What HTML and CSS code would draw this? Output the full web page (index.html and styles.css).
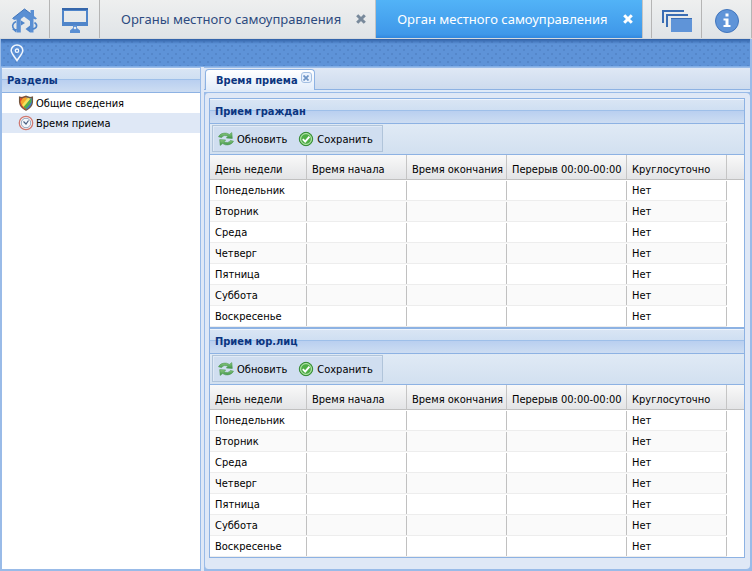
FILE: index.html
```html
<!DOCTYPE html>
<html lang="ru">
<head>
<meta charset="utf-8">
<title>Орган местного самоуправления</title>
<link rel="stylesheet" href="styles.css">
</head>
<body>
<svg class="defs" aria-hidden="true">
  <defs>
    <linearGradient id="green" x1="0" y1="0" x2="0" y2="1"><stop offset="0" stop-color="#8fcb80"/><stop offset="1" stop-color="#3f9448"/></linearGradient>
    <symbol id="refresh" viewBox="0 0 16 16">
      <path d="M.5 5.800C2 2.800 5 1.800 8.500 2.200L11.500 3.400 13.800 1.600 14.300 7.400 8.300 7 10 5.300C7.500 4 5 4.200 3.600 6.600z" fill="url(#green)" stroke="#4b9750" stroke-width=".6"/>
      <path d="M15.500 10.200C14 13.200 11 14.200 7.500 13.800L4.500 12.600 2.200 14.400 1.700 8.600 7.700 9 6 10.700C8.500 12 11 11.800 12.400 9.400z" fill="url(#green)" stroke="#4b9750" stroke-width=".6"/>
    </symbol>
    <symbol id="save" viewBox="0 0 16 16">
      <circle cx="8" cy="8" r="6.700" fill="#4fae45" stroke="#358b35" stroke-width="1"/>
      <circle cx="8" cy="8" r="5.400" fill="none" stroke="#c4eabb" stroke-width="1"/>
      <path d="M4.800 8.100l2.400 2.500 4.200-5" fill="none" stroke="#fff" stroke-width="1.900"/>
    </symbol>
  </defs>
</svg>

<header class="topbar">
  <button class="icon-button" type="button" aria-label="Главная">
    <svg width="28" height="26" viewBox="0 0 28 26"><path d="M1.500 10.500L13.500 1l6 4.500V2h3.500v6l3 2.500-1.500 1-2-.8V24.500h-3.500V13L13 8.500 9.800 11v13.500H5.500V11.500L3 12z" fill="#5a8fd3"/><path d="M1.500 10.500L13.500 1l6 4.500" fill="none" stroke="#3f73b9"/><path d="M5 13.500C.8 15.500.8 19 3.500 21.500M23.500 14.500c3.500 2.500 2.500 6-2 6.500" fill="none" stroke="#4f85ca" stroke-width="1.600"/><path d="M1 21h5l-1 3.500zM19 17.500v7l-4.500-3.500zM10 17.500v-5l4 2.500z" fill="#4f85ca"/></svg>
  </button>
  <button class="icon-button" type="button" aria-label="Рабочий стол">
    <svg width="28" height="26" viewBox="0 0 28 26"><path d="M1 1h26v17H1zM3 3v11h22V3z" fill="#4f85ca" fill-rule="evenodd"/><path d="M1 1h26" stroke="#3566ab" stroke-width="2"/><path d="M12 17h4v3l3 2.500V25H9v-2.500l3-2.500z" fill="#5a8fd3"/><circle cx="14" cy="20" r="1.300" fill="#e5eaf0"/></svg>
  </button>
  <div class="page-tab">
    <button class="page-name" type="button">Органы местного самоуправления</button>
    <button class="page-close" type="button" aria-label="Закрыть"><svg width="10" height="10" viewBox="0 0 10 10"><path d="M1.200 1.200l7.600 7.600M8.800 1.200L1.200 8.800" stroke="currentColor" stroke-width="3"/></svg></button>
  </div>
  <div class="page-tab page-tab-active">
    <button class="page-name" type="button">Орган местного самоуправления</button>
    <button class="page-close" type="button" aria-label="Закрыть"><svg width="10" height="10" viewBox="0 0 10 10"><path d="M1.200 1.200l7.600 7.600M8.800 1.200L1.200 8.800" stroke="currentColor" stroke-width="3"/></svg></button>
  </div>
  <div class="spacer"></div>
  <button class="icon-button" type="button" aria-label="Окна">
    <svg width="30" height="24" viewBox="0 0 30 24"><path d="M1 14V2h21M5 18V6h21" fill="none" stroke="#3a6db4" stroke-width="2"/><path d="M9 9h21v14H9z" fill="#5f94d8"/><path d="M9 9.500h21" stroke="#3a6db4"/></svg>
  </button>
  <button class="icon-button" type="button" aria-label="Информация">
    <svg width="26" height="26" viewBox="0 0 26 26"><circle cx="13" cy="13" r="11.500" fill="#5f94d8" stroke="#4175bd"/><path d="M11.500 5.500h3v3h-3zM9.500 10.500h5v6.500h2v2h-7v-2h2v-4.500h-2z" fill="#fff"/></svg>
  </button>
</header>

<div class="bluebar">
  <svg width="14" height="18" viewBox="0 0 14 18"><path d="M7 16.500C4.500 12.500 1.200 9.500 1.200 6.500a5.800 5.500 0 0 1 11.600 0c0 3-3.300 6-5.800 10z" fill="none" stroke="#f2f7fd" stroke-width="1.500"/><circle cx="7" cy="6.700" r="1.700" fill="none" stroke="#f2f7fd" stroke-width="1.300"/></svg>
</div>

<main class="workspace">
  <aside class="sidebar">
    <h2 class="title">Разделы</h2>
    <nav>
      <a class="section" href="#info"><svg width="16" height="16" viewBox="0 0 16 16"><path d="M8 1.500L1.500 2v5c.3 4 3 6.500 6.500 8.200z" fill="#e5482d"/><path d="M8 1.500l6.500.5v5c-.3 4-3 6.500-6.500 8.200z" fill="#3f78d0"/><path d="M5 2.500h5L4.500 11 2.500 7z" fill="#f3a62d"/><path d="M10 2.500l3 .5-7 9.500L4 10z" fill="#f5e25a"/><path d="M13.500 3v4L8 14l-2.500-2z" fill="#55ad48"/><path d="M1.500 2L4 2.800 8 1.200l4 1.600 2.500-.8v5c-.3 4-3 6.500-6.500 8.200C4.500 13.500 1.800 11 1.500 7z" fill="none" stroke="#70553e" stroke-width="1.100"/></svg><span>Общие сведения</span></a>
      <a class="section section-active" href="#hours"><svg width="16" height="16" viewBox="0 0 16 16"><circle cx="8" cy="8" r="6.700" fill="#fff" stroke="#cf7870" stroke-width="1.300"/><circle cx="8" cy="8" r="4.800" fill="#f3f7fc" stroke="#8e9fb8"/><path d="M5.500 6.500L8 9l2.500-3.500" fill="none" stroke="#4b5f80" stroke-width="1.200"/></svg><span>Время приема</span></a>
    </nav>
  </aside>

  <section class="content">
    <div class="tabstrip">
      <div class="tab"><button class="tab-name" type="button">Время приема</button><button class="tab-close" type="button" aria-label="Закрыть"><svg width="6" height="6" viewBox="0 0 6 6"><path d="M.5.5l5 5M5.500.5l-5 5" stroke="#6e94c4" stroke-width="1.700"/></svg></button></div>
    </div>
    <div class="panels">
      <section class="panel">
        <h2 class="title">Прием граждан</h2>
        <div class="toolbar"><div class="group"><button type="button"><svg width="16" height="16"><use href="#refresh"/></svg><span>Обновить</span></button><button type="button"><svg width="16" height="16"><use href="#save"/></svg><span>Сохранить</span></button></div></div>
        <table>
          <colgroup><col class="c-day"><col class="c-time"><col class="c-time"><col class="c-break"><col class="c-time"><col></colgroup>
          <thead><tr><th>День недели</th><th>Время начала</th><th>Время окончания</th><th>Перерыв 00:00-00:00</th><th>Круглосуточно</th><th></th></tr></thead>
          <tbody>
            <tr><td>Понедельник</td><td></td><td></td><td></td><td>Нет</td><td></td></tr>
            <tr><td>Вторник</td><td></td><td></td><td></td><td>Нет</td><td></td></tr>
            <tr><td>Среда</td><td></td><td></td><td></td><td>Нет</td><td></td></tr>
            <tr><td>Четверг</td><td></td><td></td><td></td><td>Нет</td><td></td></tr>
            <tr><td>Пятница</td><td></td><td></td><td></td><td>Нет</td><td></td></tr>
            <tr><td>Суббота</td><td></td><td></td><td></td><td>Нет</td><td></td></tr>
            <tr><td>Воскресенье</td><td></td><td></td><td></td><td>Нет</td><td></td></tr>
          </tbody>
        </table>
      </section>
      <section class="panel">
        <h2 class="title">Прием юр.лиц</h2>
        <div class="toolbar"><div class="group"><button type="button"><svg width="16" height="16"><use href="#refresh"/></svg><span>Обновить</span></button><button type="button"><svg width="16" height="16"><use href="#save"/></svg><span>Сохранить</span></button></div></div>
        <table>
          <colgroup><col class="c-day"><col class="c-time"><col class="c-time"><col class="c-break"><col class="c-time"><col></colgroup>
          <thead><tr><th>День недели</th><th>Время начала</th><th>Время окончания</th><th>Перерыв 00:00-00:00</th><th>Круглосуточно</th><th></th></tr></thead>
          <tbody>
            <tr><td>Понедельник</td><td></td><td></td><td></td><td>Нет</td><td></td></tr>
            <tr><td>Вторник</td><td></td><td></td><td></td><td>Нет</td><td></td></tr>
            <tr><td>Среда</td><td></td><td></td><td></td><td>Нет</td><td></td></tr>
            <tr><td>Четверг</td><td></td><td></td><td></td><td>Нет</td><td></td></tr>
            <tr><td>Пятница</td><td></td><td></td><td></td><td>Нет</td><td></td></tr>
            <tr><td>Суббота</td><td></td><td></td><td></td><td>Нет</td><td></td></tr>
            <tr><td>Воскресенье</td><td></td><td></td><td></td><td>Нет</td><td></td></tr>
          </tbody>
        </table>
      </section>
    </div>
  </section>
</main>
</body>
</html>
```
FILE: styles.css
```css
* { box-sizing: border-box; }

body {
  margin: 0;
  min-height: 100vh;
  display: flex;
  flex-direction: column;
  background: #99bbe8;
  color: #000;
  font: 11px/14px Tahoma, "DejaVu Sans Condensed", "Noto Sans", sans-serif;
}

button {
  margin: 0;
  padding: 0;
  border: 0;
  background: none;
  color: inherit;
  font: inherit;
  white-space: nowrap;
}

svg { display: block; flex: none; }
.defs { position: absolute; width: 0; height: 0; }

/* Top bar */
.topbar {
  display: flex;
  height: 39px;
  border-bottom: 1px solid #d5dade;
  background: linear-gradient(#eeefef, #e0e4e7);
}
.icon-button {
  display: flex;
  flex: none;
  align-items: center;
  justify-content: center;
  width: 50px;
  padding-top: 3px;
  border-right: 1px solid #b5b5b5;
}
.spacer { flex: 1; border-right: 1px solid #b5b5b5; }
.page-tab {
  display: flex;
  align-items: center;
  gap: 15px;
  padding: 0 9px 0 21px;
  border-right: 1px solid #c4c4c4;
  color: #2d4b80;
}
.page-tab-active {
  background: linear-gradient(#52b3f7, #3f98e9 90%, #3187dd);
  color: #fff;
}
.page-name {
  font-family: "Noto Sans", sans-serif;
  font-size: 13px;
  line-height: 18px;
}
.page-close { color: #78899b; }
.page-tab-active .page-close { color: #fff; }

.bluebar {
  display: flex;
  align-items: center;
  height: 28px;
  margin: 0 2px 0 1px;
  padding-left: 9px;
  border-bottom: 1px solid #82aee5;
  background:
    linear-gradient(#2f60a6, rgba(47, 96, 166, 0) 5px),
    conic-gradient(from 90deg at 6px 6px, #5587ca 25%, transparent 0) 0 0 / 8px 8px,
    conic-gradient(from 90deg at 6px 6px, #5587ca 25%, transparent 0) 4px 4px / 8px 8px,
    #5e93d8;
}

/* Work area */
.workspace {
  flex: 1;
  display: grid;
  grid-template-columns: 199px 1fr;
  gap: 3px;
  padding: 1px 2px 2px;
  background: linear-gradient(90deg, #99bbe8 0 201px, #dfe8f6 201px 204px, #99bbe8 204px);
}
.sidebar { border-right: 1px solid #99bbe8; background: #fff; }
.title {
  height: 25px;
  margin: 0;
  padding-left: 5px;
  border-bottom: 1px solid #8db2e3;
  background: linear-gradient(#eef4fc 0 1px, #d9e5f4 1px, #cfdff2 11px, #9ebfe9 11px 12px, #b9cff0 12px, #cdddf2);
  color: #0b3580;
  font-size: 11px;
  font-weight: bold;
  line-height: 25px;
}
.section {
  display: flex;
  align-items: center;
  gap: 2px;
  height: 20px;
  padding-left: 16px;
  color: #000;
  text-decoration: none;
}
.section-active { background: #dfe8f6; }
.section span, .group span { padding-top: 2px; }

.content { display: flex; flex-direction: column; min-width: 0; }
.tabstrip {
  display: flex;
  height: 24px;
  padding: 1px 1px 0;
  border-bottom: 2px solid #dfeaf8;
  background: linear-gradient(#dfe8f5, #cddbee 21px, #8db2e3 21px);
}
.tab {
  display: flex;
  gap: 3px;
  padding: 0 2px 0 10px;
  border: 1px solid #8db2e3;
  border-bottom: 0;
  border-radius: 4px 4px 0 0;
  background: linear-gradient(#fff, #e3edfa);
  color: #0b3580;
  font-weight: bold;
}
.tab-name { padding-top: 2px; }
.tab-close {
  display: grid;
  place-items: center;
  width: 11px;
  height: 11px;
  margin-top: 2px;
  border: 1px solid #a3bfe2;
  border-radius: 3px;
  background: #eaf2fd;
}
.panels {
  flex: 1;
  margin-top: 1px;
  padding: 5px 5px 10px 4px;
  border: 1px solid #99bbe8;
  border-width: 0 0 0 1px;
  border-radius: 4px;
  background: #dfe8f6;
}
.panel { border: 1px solid #8db2e3; background: #fff; }
.toolbar {
  display: flex;
  height: 31px;
  padding: 1px 2px;
  border-bottom: 1px solid #8db2e3;
  background: linear-gradient(#e0eaf5, #d2e0f0);
}
.group {
  display: flex;
  gap: 11px;
  height: 27px;
  padding: 0 9px 0 5px;
  border: 1px solid #b0c4da;
  background: #d0def0;
  box-shadow: inset 1px 1px #e0eaf6;
}
.group button { display: flex; align-items: center; gap: 3px; }

table { width: 100%; table-layout: fixed; border-collapse: separate; border-spacing: 0; }
.c-day { width: 97px; }
.c-time { width: 100px; }
.c-break { width: 120px; }
th {
  height: 25px;
  padding: 6px 0 0 5px;
  border-right: 1px solid #c5c5c5;
  border-bottom: 1px solid #c0c0c0;
  background: linear-gradient(#f9f9f9, #e3e4e6);
  font-weight: normal;
  text-align: left;
  white-space: nowrap;
}
td {
  height: 21px;
  padding: 2px 0 0 5px;
  border-bottom: 1px solid #ededed;
  background: linear-gradient(#c0c0c0, #c0c0c0) 100% 1px / 1px 19px no-repeat;
}
tr:nth-child(even) td:not(:last-child) { background-color: #fafafa; }
th:last-child { border-right: 0; }
td:last-child { border-bottom-color: #fff; background: none; }
```
